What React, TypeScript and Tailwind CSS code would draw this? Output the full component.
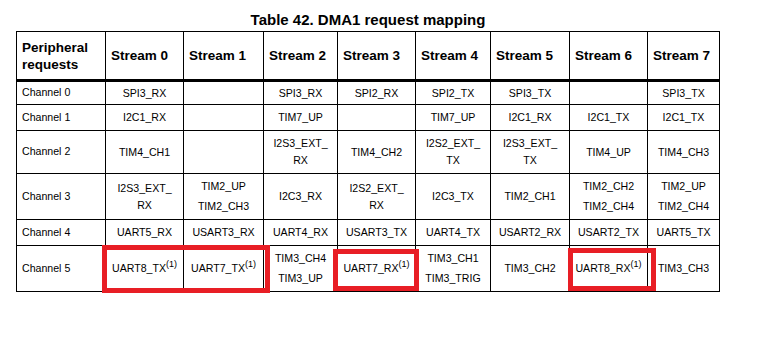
import React from 'react'

// '/' splits separate signals in one cell, '~' marks a wrapped line, '*' a footnote
const streams = ['Stream 0', 'Stream 1', 'Stream 2', 'Stream 3', 'Stream 4', 'Stream 5', 'Stream 6', 'Stream 7']

const rows: { label: string; h: string; cells: string[] }[] = [
  { label: 'Channel 0', h: 'h-[24px]', cells: ['SPI3_RX', '', 'SPI3_RX', 'SPI2_RX', 'SPI2_TX', 'SPI3_TX', '', 'SPI3_TX'] },
  { label: 'Channel 1', h: 'h-[26px]', cells: ['I2C1_RX', '', 'TIM7_UP', '', 'TIM7_UP', 'I2C1_RX', 'I2C1_TX', 'I2C1_TX'] },
  { label: 'Channel 2', h: 'h-[43px]', cells: ['TIM4_CH1', '', 'I2S3_EXT_~RX', 'TIM4_CH2', 'I2S2_EXT_~TX', 'I2S3_EXT_~TX', 'TIM4_UP', 'TIM4_CH3'] },
  { label: 'Channel 3', h: 'h-[46px]', cells: ['I2S3_EXT_~RX', 'TIM2_UP/TIM2_CH3', 'I2C3_RX', 'I2S2_EXT_~RX', 'I2C3_TX', 'TIM2_CH1', 'TIM2_CH2/TIM2_CH4', 'TIM2_UP/TIM2_CH4'] },
  { label: 'Channel 4', h: 'h-[26px]', cells: ['UART5_RX', 'USART3_RX', 'UART4_RX', 'USART3_TX', 'UART4_TX', 'USART2_RX', 'USART2_TX', 'UART5_TX'] },
  { label: 'Channel 5', h: 'h-[46px]', cells: ['UART8_TX*', 'UART7_TX*', 'TIM3_CH4/TIM3_UP', 'UART7_RX*', 'TIM3_CH1/TIM3_TRIG', 'TIM3_CH2', 'UART8_RX*', 'TIM3_CH3'] },
]

const colWidths = ['w-[89px]', 'w-[78px]', 'w-[80px]', 'w-[74px]', 'w-[78px]', 'w-[75px]', 'w-[79px]', 'w-[78px]', 'w-[72px]']

function Signal({ text }: { text: string }) {
  const note = text.endsWith('*')
  const name = note ? text.slice(0, -1) : text
  const parts = name.split('~')
  return (
    <div className="leading-[17px]">
      {parts.map((p, i) => (
        <div key={i}>
          {p}
          {note && i === parts.length - 1 && <sup className="text-[9px] -top-[0.6em]">(1)</sup>}
        </div>
      ))}
    </div>
  )
}

function Cell({ value }: { value: string }) {
  if (!value) return null
  return (
    <div className="flex flex-col items-center gap-[3px]">
      {value.split('/').map((s) => (
        <Signal key={s} text={s} />
      ))}
    </div>
  )
}

export default function App() {
  return (
    <div
      className="relative w-[765px] h-[345px] bg-white text-black pl-4 pt-[11px]"
      style={{ fontFamily: '"Liberation Sans", Arial, sans-serif' }}
    >
      <div className="w-[704px] text-center font-bold text-[15px] leading-[17px]">Table 42. DMA1 request mapping</div>
      <table className="mt-[3px] table-fixed border-collapse w-[704px]">
        <colgroup>
          {colWidths.map((w, i) => (
            <col key={i} className={w} />
          ))}
        </colgroup>
        <thead>
          <tr className="h-[49px]">
            <th className="border border-black border-b-[3px] px-[5px] text-left align-middle font-bold text-[13.5px] leading-[17px]">
              Peripheral
              <br />
              requests
            </th>
            {streams.map((s) => (
              <th key={s} className="border border-black border-b-[3px] px-[5px] text-left align-middle font-bold text-[13.5px] leading-[17px]">
                {s}
              </th>
            ))}
          </tr>
        </thead>
        <tbody className="text-[10.6px]">
          {rows.map((r) => (
            <tr key={r.label} className={r.h}>
              <td className="border border-black px-[5px] text-left align-middle">{r.label}</td>
              {r.cells.map((c, i) => (
                <td key={i} className="border border-black px-1 text-center align-middle">
                  <Cell value={c} />
                </td>
              ))}
            </tr>
          ))}
        </tbody>
      </table>

      {/* red highlight boxes drawn over the table */}
      <div className="absolute left-[102px] top-[245px] w-[168px] h-[48px] border-[5px] border-[#e81e25]" />
      <div className="absolute left-[333px] top-[249px] w-[86px] h-[42px] border-[5px] border-[#e81e25]" />
      <div className="absolute left-[568px] top-[248px] w-[88px] h-[43px] border-[5px] border-[#e81e25]" />
    </div>
  )
}
